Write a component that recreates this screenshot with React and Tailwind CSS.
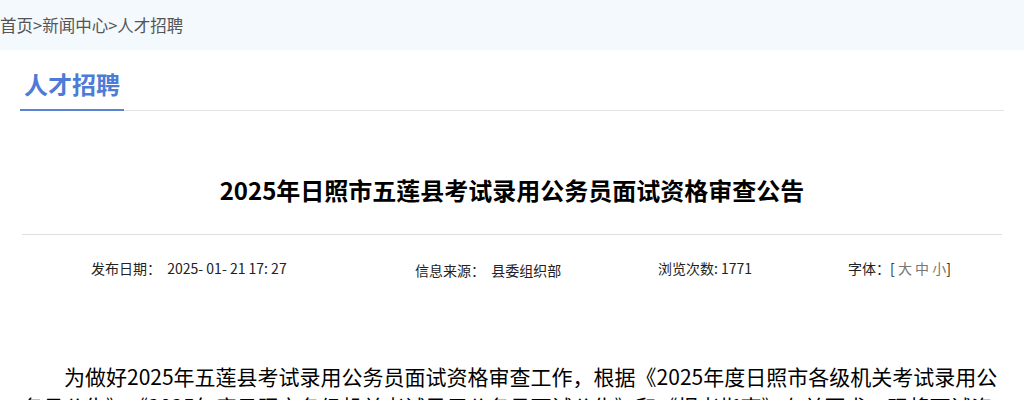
import React from "react";

const font = { fontFamily: '"Noto Sans CJK SC", "Noto Sans", sans-serif' };

export default function App() {
  return (
    <div className="w-[1024px] h-[400px] overflow-hidden bg-white" style={font}>
      <div className="h-[50px] bg-[#f4f9fe] flex items-center text-[16.5px] text-[#555]">
        首页&gt;新闻中心&gt;人才招聘
      </div>

      <div className="mx-[20px] mt-[16px] flex border-b border-[#e2e2e2]">
        <div className="px-[4px] pb-[7px] border-b-2 border-[#5a83d2] -mb-px text-[24px] leading-[36px] font-bold text-[#4d7bd7]">
          人才招聘
        </div>
      </div>

      <div className="mx-[22px]">
        <h1 className="pt-[62px] pb-[27px] text-center text-[24px] leading-[34px] font-bold text-black border-b border-[#dedede]">
          2025年日照市五莲县考试录用公务员面试资格审查公告
        </h1>

        <div className="flex text-[14px] leading-[20px] text-[#222] pt-[23px]">
          <div className="ml-[69px] w-[324px]">发布日期：&nbsp; 2025- 01- 21 17: 27</div>
          <div className="w-[243px] pt-[2px]">信息来源：&nbsp; 县委组织部</div>
          <div className="w-[190px]">浏览次数: 1771</div>
          <div>
            字体：[ <span className="text-[#777]">大 中 小</span>]
          </div>
        </div>

        <p className="mt-[81px] text-[21px] leading-[30px] text-black indent-[42px]">
          为做好2025年五莲县考试录用公务员面试资格审查工作，根据《2025年度日照市各级机关考试录用公务员公告》、《2025年度日照市各级机关考试录用公务员面试公告》和《报考指南》有关要求，现将面试资格审查有关事项公告如下。
        </p>
      </div>
    </div>
  );
}
